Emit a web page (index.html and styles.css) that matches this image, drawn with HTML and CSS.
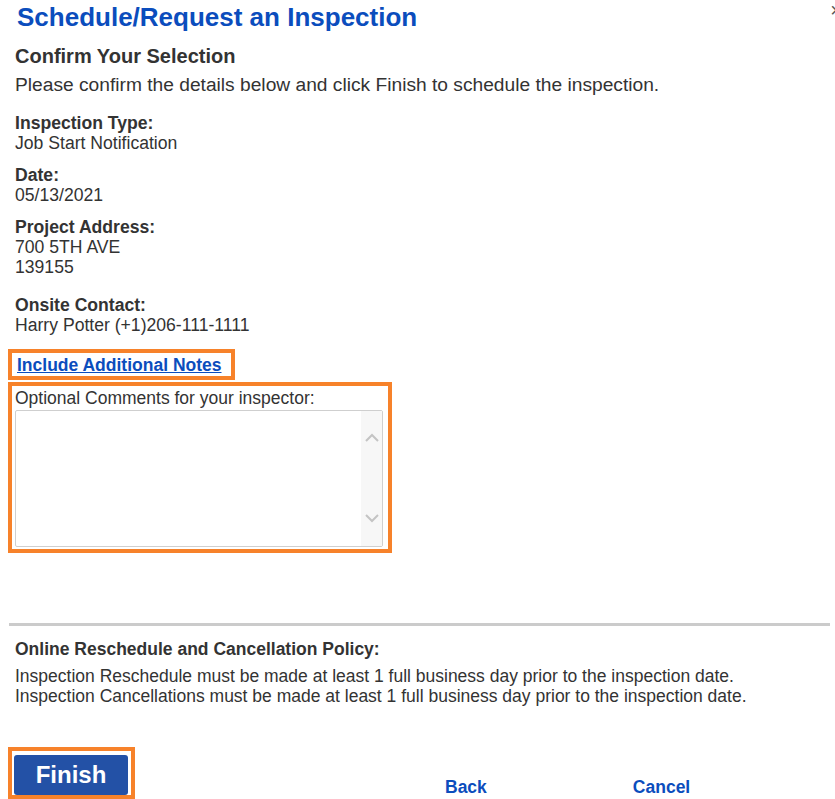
FILE: index.html
```html
<!DOCTYPE html>
<html>
<head>
<meta charset="utf-8">
<link rel="stylesheet" href="styles.css">
</head>
<body>
<div class="page">
  <h1 class="title">Schedule/Request an Inspection</h1>
  <span class="close">&times;</span>
  <h2 class="subtitle">Confirm Your Selection</h2>
  <p class="intro">Please confirm the details below and click Finish to schedule the inspection.</p>

  <dl class="details">
    <div class="item">
      <dt>Inspection Type:</dt>
      <dd>Job Start Notification</dd>
    </div>
    <div class="item">
      <dt>Date:</dt>
      <dd>05/13/2021</dd>
    </div>
    <div class="item">
      <dt>Project Address:</dt>
      <dd>700 5TH AVE<br>139155</dd>
    </div>
    <div class="item item-contact">
      <dt>Onsite Contact:</dt>
      <dd>Harry Potter (+1)206-111-1111</dd>
    </div>
  </dl>

  <div class="hl hl-link"><a href="#" class="notes-link">Include Additional Notes</a></div>
  <div class="hl hl-comments">
    <label class="comments-label">Optional Comments for your inspector:</label>
    <div class="textarea">
      <div class="ta-body"></div>
      <div class="ta-scroll">
        <svg width="16" height="10" viewBox="0 0 16 10"><path d="M2 8 L8 2 L14 8" fill="none" stroke="#c4c4c4" stroke-width="2"/></svg>
        <svg width="16" height="10" viewBox="0 0 16 10"><path d="M2 2 L8 8 L14 2" fill="none" stroke="#c4c4c4" stroke-width="2"/></svg>
      </div>
    </div>
  </div>

  <hr class="rule">
  <h3 class="policy-title">Online Reschedule and Cancellation Policy:</h3>
  <p class="policy">Inspection Reschedule must be made at least 1 full business day prior to the inspection date.<br>Inspection Cancellations must be made at least 1 full business day prior to the inspection date.</p>

  <div class="actions">
    <div class="hl hl-finish"><button class="finish">Finish</button></div>
    <a href="#" class="action back">Back</a>
    <a href="#" class="action cancel">Cancel</a>
  </div>
</div>
</body>
</html>
```
FILE: styles.css
```css
html, body {
  margin: 0;
  padding: 0;
  background: #fff;
}
body {
  font-family: "Liberation Sans", Arial, sans-serif;
  color: #333;
  overflow: hidden;
}
.page {
  position: relative;
  width: 835px;
  height: 799px;
  padding: 0 0 0 15px;
  box-sizing: border-box;
}
.title {
  margin: 0;
  padding: 3px 0 0 2px;
  font-size: 26px;
  line-height: 28px;
  font-weight: bold;
  color: #0b4dbd;
}
.close {
  position: absolute;
  right: -7px;
  top: 0;
  font-size: 20px;
  line-height: 20px;
  color: #555;
}
.subtitle {
  margin: 14px 0 0 0;
  font-size: 20px;
  line-height: 22px;
  font-weight: bold;
  color: #333;
}
.intro {
  margin: 6px 0 0 0;
  font-size: 19.2px;
  line-height: 23px;
}
.details {
  margin: 17px 0 0 0;
}
.item {
  margin-bottom: 12px;
}
.item dt {
  font-size: 17.6px;
  font-weight: bold;
  line-height: 20px;
}
.item dd {
  margin: 0;
  font-size: 17.6px;
  line-height: 20px;
}
.item-contact {
  margin-top: 18px;
}
.hl {
  border: 4px solid #f7822a;
  box-sizing: border-box;
}
.hl-link {
  margin: 14px 0 0 -7px;
  width: 227px;
  height: 31px;
  padding: 2px 0 0 5px;
}
.notes-link {
  font-size: 17.5px;
  font-weight: bold;
  color: #0b4dbd;
  text-decoration: underline;
  line-height: 20px;
}
.hl-comments {
  margin: 2px 0 0 -7px;
  width: 384px;
  height: 171px;
  padding: 1px 5px 0 3px;
}
.comments-label {
  display: block;
  font-size: 17.5px;
  line-height: 23px;
  color: #333;
}
.textarea {
  display: flex;
  height: 137px;
  border: 1px solid #cfcfcf;
  border-radius: 2px;
  box-sizing: border-box;
}
.ta-body {
  flex: 1;
}
.ta-scroll {
  width: 21px;
  background: #f7f7f7;
  display: flex;
  flex-direction: column;
  align-items: center;
  justify-content: space-between;
  padding: 22px 0 23px 0;
}
.rule {
  margin: 70px 5px 0 -6px;
  border: 0;
  height: 3px;
  background: #cbcbcb;
}
.policy-title {
  margin: 13px 0 0 0;
  font-size: 17.5px;
  line-height: 20px;
  font-weight: bold;
}
.policy {
  margin: 7px 0 0 0;
  font-size: 17.5px;
  line-height: 20px;
}
.actions {
  margin: 41px 0 0 -7px;
  display: flex;
  align-items: flex-end;
}
.hl-finish {
  width: 127px;
  height: 52px;
  padding: 4px 0 0 2px;
}
.finish {
  width: 114px;
  height: 40px;
  background: #2351a6;
  border: 0;
  border-radius: 3px;
  color: #fff;
  font-family: "Liberation Sans", Arial, sans-serif;
  font-size: 24px;
  font-weight: bold;
  padding: 0;
}
.action {
  font-size: 17.5px;
  font-weight: bold;
  color: #0b4dbd;
  text-decoration: none;
  line-height: 20px;
  margin-bottom: 2px;
}
.back {
  margin-left: 310px;
}
.cancel {
  margin-left: 146px;
}
```
